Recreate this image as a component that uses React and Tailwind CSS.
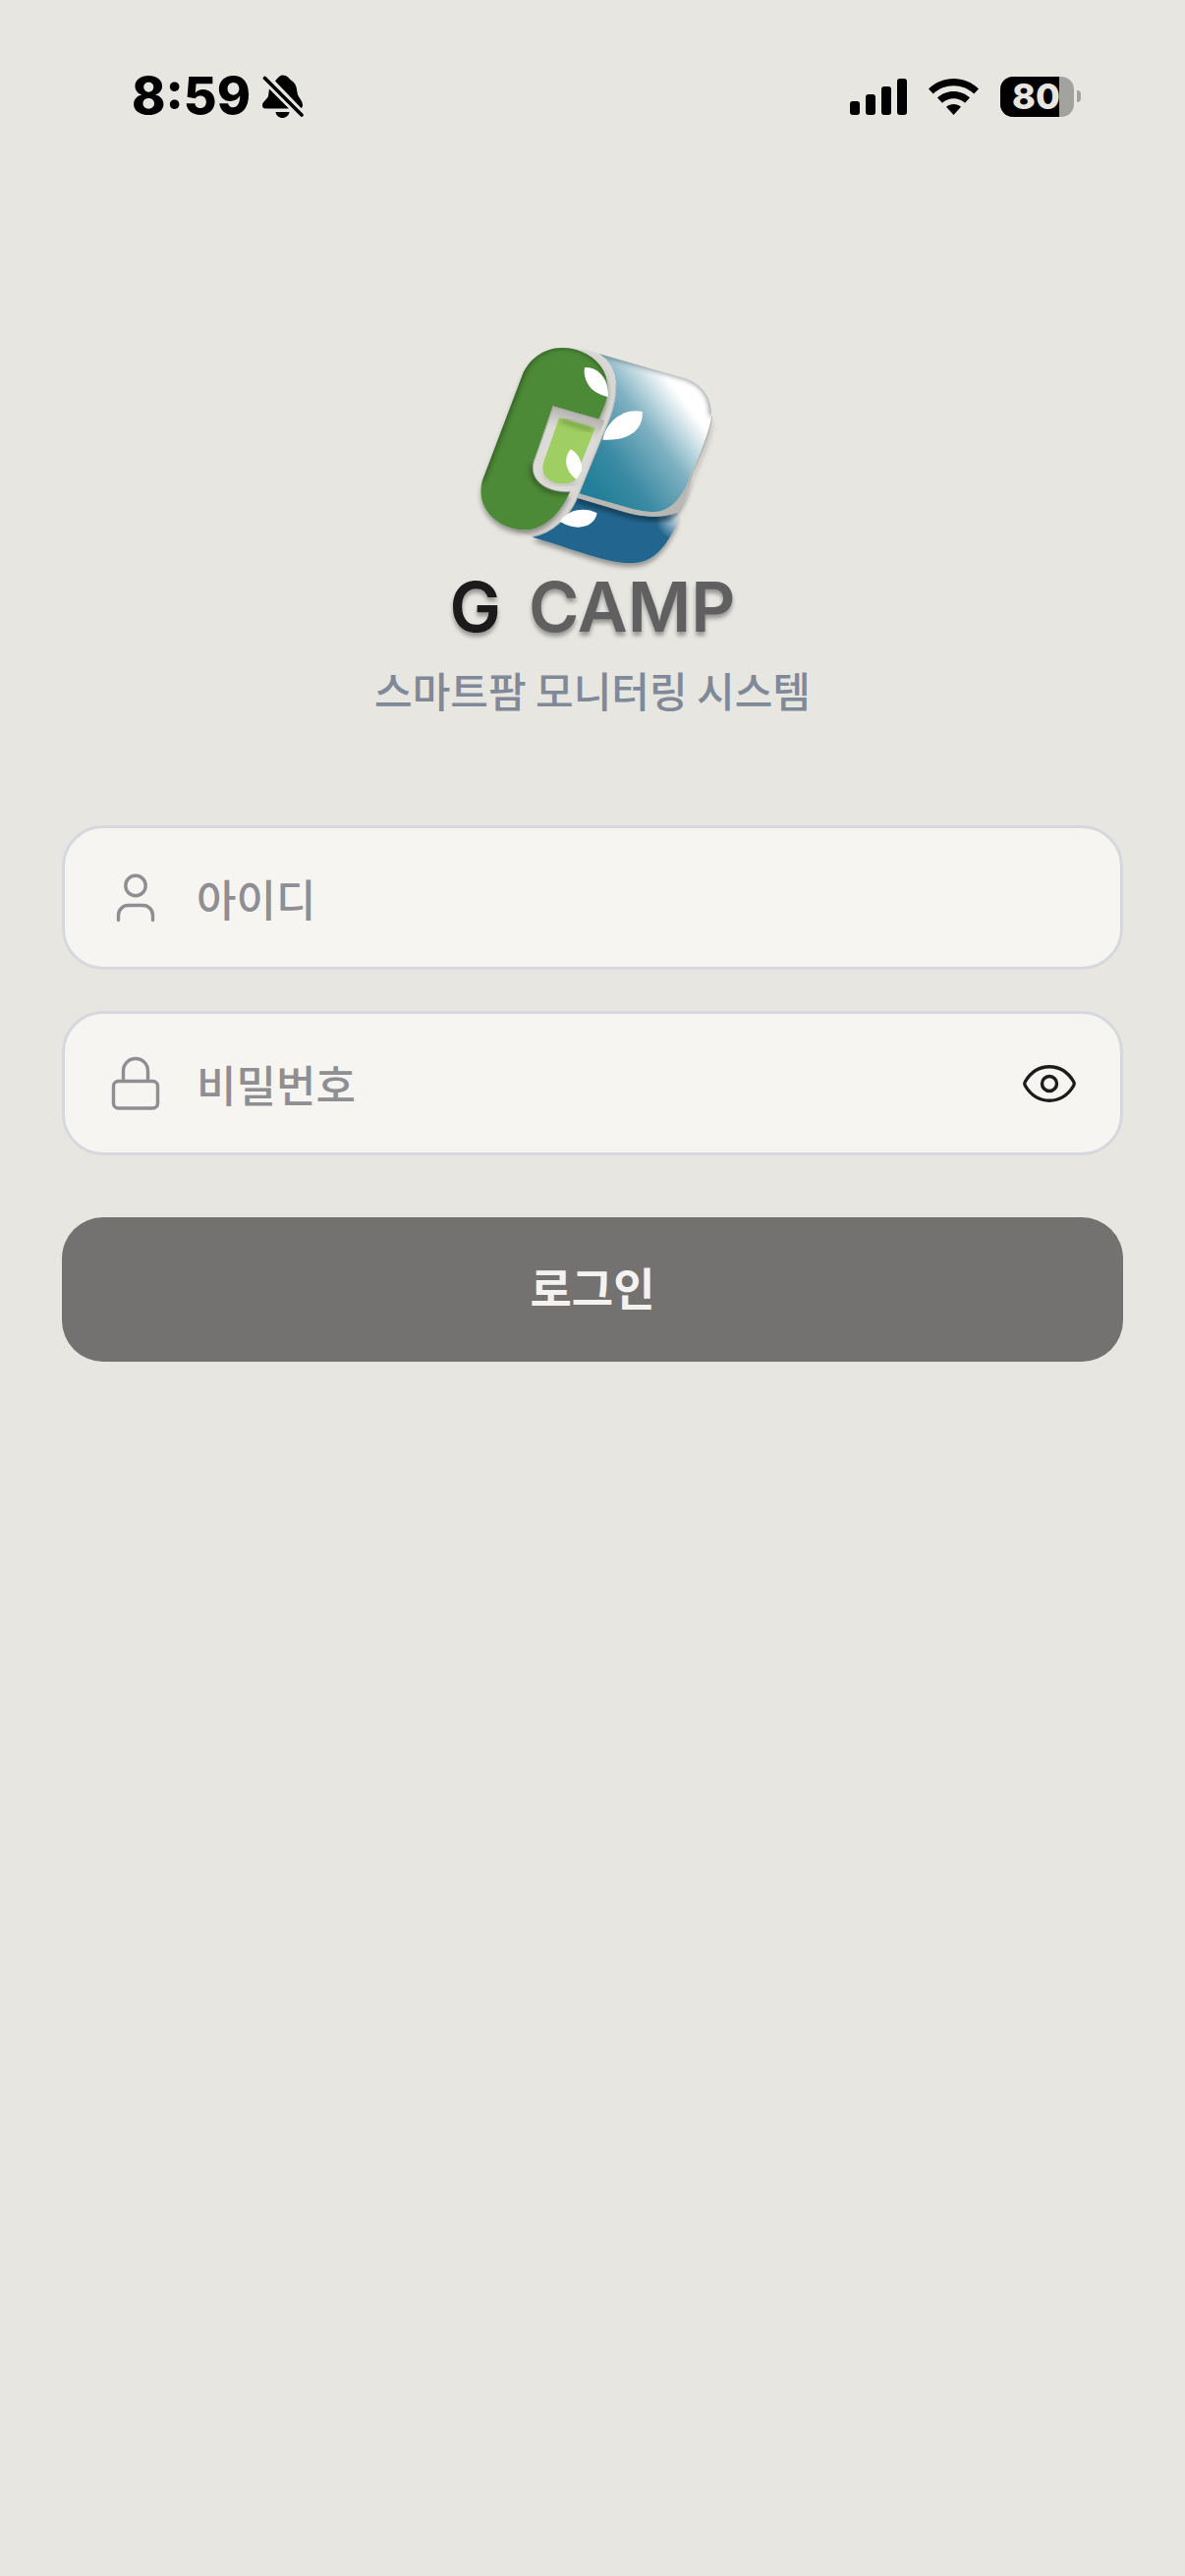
import { useState } from "react";

function BellOff() {
  return <svg viewBox="0 0 42 44" className="w-[42px] h-11" aria-hidden="true">
      <path
        d="M13 6.500C15 4.500 17 1 20.500 0.500C25 0.500 27 3.500 29 5.500C34 8.500 35 13 35.500 18C36 23 41 26 41 31C41 33 40.500 33.500 39.500 34ZM7 14.500L27 34.500H3C1 34.500 0 33 0 31C0.500 27 5 25 6 22ZM13.500 38H27.500C27 41.500 24 44 20.500 44C17 44 14 41.500 13.500 38Z"
      />
      <path d="M2.500 3.500L40 41" stroke="black" strokeWidth="3.600" strokeLinecap="round" />
    </svg>;
}

function Signal() {
  return <svg viewBox="0 0 58 37" className="w-[58px] h-[37px]" aria-hidden="true">
      <rect x="0" y="23" width="10" height="14" rx="3" />
      <rect x="16" y="16" width="10" height="21" rx="3" />
      <rect x="32" y="8" width="10" height="29" rx="3" />
      <rect x="48" y="0" width="10" height="37" rx="3" />
    </svg>;
}

function Wifi() {
  return <svg viewBox="0 0 51 37" className="w-[51px] h-[37px]" aria-hidden="true">
      <path d="M0 10.500C14 -3.500 37 -3.500 51 10.500L46.200 15.500C35 4.500 16 4.500 4.800 15.500Z" />
      <path d="M9 19.500C18 10.700 33 10.700 42 19.500L37 24.800C30.500 18.700 20.500 18.700 14 24.800Z" />
      <path d="M18 28.800C22.500 25 28.500 25 33 28.800L25.500 37Z" />
    </svg>;
}

function Battery({ level }) {
  return <div className="flex items-center gap-[3px]">
      <div className="relative flex h-[41px] w-[75px] items-center overflow-hidden rounded-[13px] bg-[#a2a29e] pl-3">
        <div className="absolute inset-y-0 left-0 bg-black" style={{ width: `${level}%` }} />
        <span className="relative font-['Inter',sans-serif] text-[36px] leading-none font-extrabold text-[#e7e6e1]">{level}</span>
      </div>
      <div className="h-3 w-1 rounded-r-full bg-[#a2a29e]" />
    </div>;
}

function StatusBar() {
  return <header className="flex items-center justify-between pt-[76px] pr-[106px] pl-[134px]">
      <div className="flex items-center gap-3">
        <time className="font-['Inter',sans-serif] text-[52px] leading-[44px] font-extrabold">8:59</time>
        <BellOff />
      </div>
      <div className="flex items-center gap-[22px]">
        <Signal />
        <Wifi />
        <Battery level={80} />
      </div>
    </header>;
}

function LogoMark() {
  return <svg viewBox="-12 0 822 750" className="h-[250px] w-[274px]" aria-hidden="true">
      <defs>
        <linearGradient id="teal" gradientUnits="userSpaceOnUse" x1="400" y1="470" x2="725" y2="225">
          <stop offset="0" stopColor="#237f99" />
          <stop offset="0.250" stopColor="#3a8aa3" />
          <stop offset="0.600" stopColor="#7fb1c2" />
          <stop offset="0.940" stopColor="#ffffff" />
        </linearGradient>
        <radialGradient id="shine" gradientUnits="userSpaceOnUse" cx="662" cy="562" r="70">
          <stop offset="0" stopColor="#d5e2eb" />
          <stop offset="1" stopColor="#22668f" />
        </radialGradient>
        <linearGradient id="notch" gradientUnits="userSpaceOnUse" x1="345" y1="235" x2="325" y2="300">
          <stop offset="0" stopColor="#b0aea9" />
          <stop offset="0.600" stopColor="#cfcdc8" />
          <stop offset="1" stopColor="#dddbd7" />
        </linearGradient>
        <filter id="drop" x="-20%" y="-20%" width="140%" height="150%">
          <feDropShadow dx="0" dy="12" stdDeviation="8" floodColor="#000" floodOpacity="0.350" />
        </filter>
        <filter id="soft" x="-20%" y="-20%" width="140%" height="140%">
          <feGaussianBlur stdDeviation="8" />
        </filter>
        <clipPath id="clipTeal">
          <path d="M418 60L680 135C740 155 764 200 762 250C758 290 735 345 700 430C670 510 630 545 580 543C550 541 530 537 500 528L357 487L425 320C455 250 472 210 470 150C468 110 450 80 418 60Z" />
        </clipPath>
        <clipPath id="clipGreen">
          <path d="M185 125C205 75 255 42 305 42C370 42 425 80 440 130C449 165 447 185 437 215L418 260L278 220L219 392C205 440 250 485 330 482C300 550 250 598 190 598C105 595 42 530 62 450Z" />
        </clipPath>
      </defs>

      <g filter="url(#drop)">
        <path d="M345 498L500 545C560 562 610 560 658 545C660 565 656 585 645 603C600 685 560 705 490 698C420 690 350 660 215 620C270 605 320 560 345 498Z" fill="url(#shine)" />
      </g>
      <path d="M350 508L500 550C560 567 610 565 640 560" stroke="#173f5c" strokeWidth="14" fill="none" opacity="0.500" filter="url(#soft)" />

      <g filter="url(#drop)">
        <path d="M357 487L500 528C590 556 655 545 700 430C735 345 758 290 762 250L765 252C762 300 740 350 705 432C690 490 672 525 655 546C610 562 560 560 500 543L345 498Z" fill="#b9b7b3" />
      </g>
      <g clipPath="url(#clipTeal)">
        <rect x="340" y="40" width="440" height="520" fill="url(#teal)" />
        <path d="M405 52L680 130C740 150 766 195 764 250" stroke="#4a5559" strokeWidth="16" fill="none" opacity="0.600" filter="url(#soft)" />
      </g>

      <path d="M305 42C350 42 390 48 418 60C450 80 468 110 470 150C472 210 455 250 425 320L357 487C330 560 275 608 215 618C190 612 160 600 150 595L330 470L400 290L437 215Z" fill="#dad8d4" />
      <path d="M470 150C472 210 455 250 425 320L357 487C330 560 275 608 215 618" stroke="#c4c2be" strokeWidth="4" fill="none" />

      <g filter="url(#drop)">
        <path d="M185 125C205 75 255 42 305 42C370 42 425 80 440 130C449 165 447 185 437 215L418 260L278 220L219 392C205 440 250 485 330 482C300 550 250 598 190 598C105 595 42 530 62 450Z" fill="#4e8a39" />
      </g>
      <path d="M278 220L418 260L436 264L345 482L330 482C250 485 205 440 219 392Z" fill="url(#notch)" />
      <path d="M280 222L418 261M280 222L219 392C205 440 250 485 332 482" stroke="#a9a7a2" strokeWidth="3" fill="none" />
      <g clipPath="url(#clipGreen)">
        <path d="M60 450L185 120C205 70 255 36 305 36C370 36 428 75 446 130" stroke="#25481b" strokeWidth="16" fill="none" opacity="0.700" filter="url(#soft)" />
        <path d="M219 400C205 445 250 490 330 482" stroke="#25481b" strokeWidth="14" fill="none" opacity="0.700" filter="url(#soft)" />
      </g>

      <path d="M252 420C256 448 300 466 350 452" stroke="#8f8d88" strokeWidth="10" fill="none" opacity="0.500" filter="url(#soft)" />
      <path d="M298 254L407 287L362 400L350 443C330 458 300 460 280 452C250 440 240 415 252 385Z" fill="#9fce63" />
      <path d="M303 264L398 293" stroke="#557a30" strokeWidth="12" opacity="0.600" filter="url(#soft)" />

      <g fill="#fff">
        <path d="M375 102C400 99 425 115 438 142C447 162 447 180 447 192C415 184 390 170 379 140C373 125 373 112 375 102Z" />
        <path d="M551 237C555 275 530 328 430 323C440 270 490 225 551 237Z" />
        <path d="M333 352C355 365 370 390 365 418L350 443C325 430 303 385 333 352Z" />
        <path d="M300 572C320 540 370 525 413 547C405 590 350 605 300 572Z" />
      </g>
    </svg>;
}

function Brand() {
  return <div className="flex flex-col items-center">
      <LogoMark />
      <h1 className="flex gap-7 font-['Inter',sans-serif] text-[70px] leading-[56px] font-semibold text-[#606060] text-shadow-[0_4px_4px_rgb(0_0_0/0.35)]">
        <span className="text-[#1d1a1b]">G</span>
        <span>CAMP</span>
      </h1>
      <p className="mt-[26px] text-[42px] leading-[60px] font-medium text-[#808998]">스마트팜 모니터링 시스템</p>
    </div>;
}

function UserIcon() {
  return <svg viewBox="0 0 60 60" className="size-[60px]" fill="none" stroke="#8e8e93" strokeWidth="3.400" strokeLinecap="round" aria-hidden="true">
      <circle cx="30" cy="17.500" r="10.200" />
      <path d="M12.500 52.500V47.500a10 10 0 0 1 10-10h15a10 10 0 0 1 10 10v5" />
    </svg>;
}

function LockIcon() {
  return <svg viewBox="0 0 60 60" className="size-[60px]" fill="none" stroke="#8e8e93" strokeWidth="3.400" aria-hidden="true">
      <rect x="7.500" y="27.500" width="45" height="27.500" rx="5" />
      <path d="M17.500 27.500V17a12.500 12.500 0 0 1 25 0v10.500" />
    </svg>;
}

function EyeIcon() {
  return <svg viewBox="0 0 60 60" className="size-[60px]" fill="none" stroke="#1c1c1e" strokeWidth="3.400" aria-hidden="true">
      <path d="M5.300 28C11 18.500 20 12.800 30 12.800S49 18.500 54.700 28q1.200 2 0 4C49 41.500 40 47.200 30 47.200S11 41.500 5.300 32q-1.200-2 0-4Z" />
      <circle cx="30" cy="30" r="7.500" />
    </svg>;
}

function Field({ icon, label, children, ...props }) {
  return <label className="flex h-[147px] items-center gap-8 rounded-[42px] border-3 border-[#d5d8de] bg-[#f6f5f1] px-[42px]">
      {icon}
      <input
        aria-label={label}
        placeholder={label}
        className="min-w-0 flex-1 bg-transparent text-[44px] leading-[66px] font-medium outline-none placeholder:text-[#8e8e93]"
        {...props}
      />
      {children}
    </label>;
}

export default function App() {
  const [id, setId] = useState("");
  const [password, setPassword] = useState("");
  const [visible, setVisible] = useState(false);

  return <div className="min-h-screen bg-[#e7e6e1] font-['Noto_Sans_CJK_KR',sans-serif] text-black">
      <StatusBar />
      <main className="px-[63px] pt-[220px]">
        <Brand />
        <form className="mt-[108px] flex flex-col gap-[42px]" onSubmit={(e) => e.preventDefault()}>
          <Field icon={<UserIcon />} label="아이디" type="text" value={id} onChange={(e) => setId(e.target.value)} />
          <Field
            icon={<LockIcon />}
            label="비밀번호"
            type={visible ? "text" : "password"}
            value={password}
            onChange={(e) => setPassword(e.target.value)}
          >
            <button type="button" aria-label="비밀번호 표시" onClick={() => setVisible(!visible)}>
              <EyeIcon />
            </button>
          </Field>
          <button type="submit" className="mt-[21px] h-[147px] rounded-[42px] bg-[#737270] pb-1.5 text-[46px] font-bold text-[#f3f2f0]">
            로그인
          </button>
        </form>
      </main>
    </div>;
}
